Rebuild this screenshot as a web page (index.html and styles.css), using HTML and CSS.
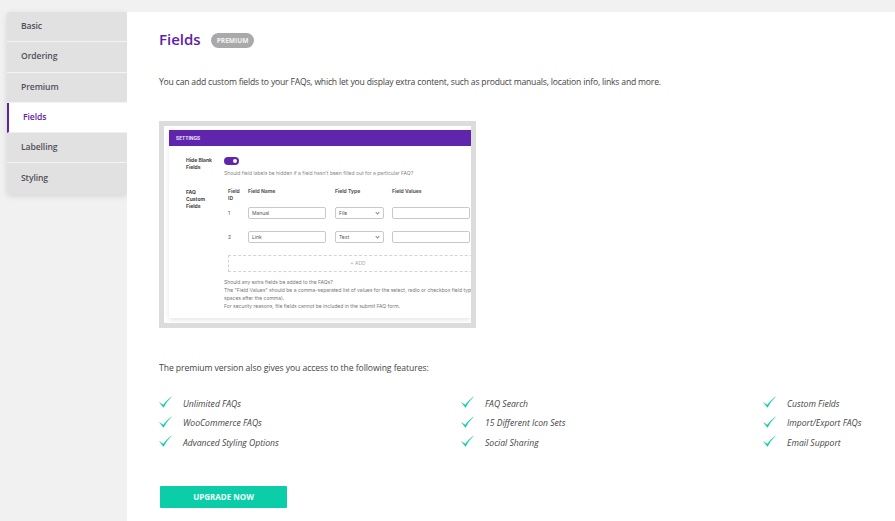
FILE: index.html
```html
<!DOCTYPE html>
<html lang="en">
<head>
<meta charset="utf-8">
<title>Fields</title>
<link rel="stylesheet" href="styles.css">
</head>
<body>
<div class="page">
  <nav class="tabs">
    <a class="tab">Basic</a>
    <a class="tab">Ordering</a>
    <a class="tab">Premium</a>
    <a class="tab active">Fields</a>
    <a class="tab">Labelling</a>
    <a class="tab">Styling</a>
  </nav>
  <main class="main">
    <div class="heading">
      <h1>Fields</h1>
      <span class="badge">PREMIUM</span>
    </div>
    <p class="intro">You can add custom fields to your FAQs, which let you display extra content, such as product manuals, location info, links and more.</p>
    <div class="shot">
      <div class="frame">
        <div class="card">
          <div class="card-head">SETTINGS</div>
          <div class="card-body">
            <div class="row-top">
              <div class="label">Hide Blank<br>Fields</div>
              <div>
                <span class="toggle"><span class="knob"></span></span>
                <div class="hint">Should field labels be hidden if a field hasn't been filled out for a particular FAQ?</div>
              </div>
            </div>
            <div class="row-fields">
              <div class="label offset">FAQ<br>Custom<br>Fields</div>
              <div class="fields">
                <div class="grid">
                  <div class="th">Field<br>ID</div>
                  <div class="th">Field Name</div>
                  <div class="th">Field Type</div>
                  <div class="th">Field Values</div>
                </div>
                <div class="grid data first">
                  <div class="td">1</div>
                  <div class="inp">Manual</div>
                  <div class="inp sel">File<span class="chev"></span></div>
                  <div class="inp"></div>
                </div>
                <div class="grid data second">
                  <div class="td">2</div>
                  <div class="inp">Link</div>
                  <div class="inp sel">Text<span class="chev"></span></div>
                  <div class="inp"></div>
                </div>
                <div class="add">+ ADD</div>
              </div>
            </div>
            <div class="notes">Should any extra fields be added to the FAQs?<br>The "Field Values" should be a comma-separated list of values for the select, radio or checkbox field types (no<br>spaces after the comma).<br>For security reasons, file fields cannot be included in the submit FAQ form.</div>
          </div>
        </div>
      </div>
    </div>
    <p class="lead">The premium version also gives you access to the following features:</p>
    <ul class="features">
      <li><svg class="tick" viewBox="0 0 13 13"><path d="M0.5 6.5 L4.5 11.5 Q7.5 5.5 12.5 0.8 Q7.5 4.5 4.3 9 Z"/></svg>Unlimited FAQs</li>
      <li><svg class="tick" viewBox="0 0 13 13"><path d="M0.5 6.5 L4.5 11.5 Q7.5 5.5 12.5 0.8 Q7.5 4.5 4.3 9 Z"/></svg>FAQ Search</li>
      <li><svg class="tick" viewBox="0 0 13 13"><path d="M0.5 6.5 L4.5 11.5 Q7.5 5.5 12.5 0.8 Q7.5 4.5 4.3 9 Z"/></svg>Custom Fields</li>
      <li><svg class="tick" viewBox="0 0 13 13"><path d="M0.5 6.5 L4.5 11.5 Q7.5 5.5 12.5 0.8 Q7.5 4.5 4.3 9 Z"/></svg>WooCommerce FAQs</li>
      <li><svg class="tick" viewBox="0 0 13 13"><path d="M0.5 6.5 L4.5 11.5 Q7.5 5.5 12.5 0.8 Q7.5 4.5 4.3 9 Z"/></svg>15 Different Icon Sets</li>
      <li><svg class="tick" viewBox="0 0 13 13"><path d="M0.5 6.5 L4.5 11.5 Q7.5 5.5 12.5 0.8 Q7.5 4.5 4.3 9 Z"/></svg>Import/Export FAQs</li>
      <li><svg class="tick" viewBox="0 0 13 13"><path d="M0.5 6.5 L4.5 11.5 Q7.5 5.5 12.5 0.8 Q7.5 4.5 4.3 9 Z"/></svg>Advanced Styling Options</li>
      <li><svg class="tick" viewBox="0 0 13 13"><path d="M0.5 6.5 L4.5 11.5 Q7.5 5.5 12.5 0.8 Q7.5 4.5 4.3 9 Z"/></svg>Social Sharing</li>
      <li><svg class="tick" viewBox="0 0 13 13"><path d="M0.5 6.5 L4.5 11.5 Q7.5 5.5 12.5 0.8 Q7.5 4.5 4.3 9 Z"/></svg>Email Support</li>
    </ul>
    <a class="cta">UPGRADE NOW</a>
  </main>
</div>
</body>
</html>
```
FILE: styles.css
```css
* { box-sizing: border-box; }
html, body { margin: 0; height: 100%; overflow: hidden; }
body { background: #f1f1f1; font-family: "Open Sans", "Noto Sans", sans-serif; color: #444; }
.page { display: flex; align-items: flex-start; padding: 12px 0 0 7px; height: 521px; }

.tabs { width: 120px; flex: none; display: flex; flex-direction: column; background: #e1e1e1; border-radius: 3px 0 0 3px; box-shadow: 0 2px 6px rgba(0,0,0,.12); }
.tab { height: 30.3px; padding: 0 0 1px 14px; display: flex; align-items: center; font-size: 8.6px; font-weight: 600; letter-spacing: -.1px; color: #50505a; border-bottom: 1px solid #f4f4f4; }
.tab:last-child { border-bottom: 0; }
.tab.active { background: #fff; color: #5f20ad; border-left: 2px solid #5f20ad; padding-left: 14px; border-bottom-color: #efefef; }

.main { flex: none; width: 768px; height: 509px; background: #fff; padding: 17px 0 0 32px; }
.heading { display: flex; align-items: center; gap: 10px; height: 20px; }
h1 { margin: 0; font-size: 15px; line-height: 20px; font-weight: 600; color: #5f20ad; }
.badge { background: #a9a9a9; color: #f4f4f4; font-size: 6.6px; font-weight: 700; line-height: 15px; height: 15px; margin-top: 2px; padding: 0 6px; border-radius: 8px; }
.intro { margin: 26px 0 0; font-size: 8.6px; letter-spacing: -.19px; line-height: 14px; color: #444; white-space: nowrap; }

.shot { width: 317px; height: 207px; margin-top: 32px; background: #dcdcdc; padding: 5px; overflow: hidden; }
.frame { height: 100%; background: #fff; padding: 4px 0 0 5px; overflow: hidden; }
.card { height: 188px; background: #fff; font-family: Inter, sans-serif; font-size: 5px; color: #666; box-shadow: 0 2px 5px rgba(0,0,0,.1); }
.card-head { height: 16px; background: #5f25ad; color: #efe6f8; font-size: 4.8px; font-weight: 700; line-height: 16px; padding-left: 7px; }
.card-body { padding: 0 0 0 17px; overflow: hidden; }
.label { width: 38px; flex: none; font-weight: 700; color: #444; line-height: 7px; }
.offset { padding-top: 1px; }
.row-top { display: flex; padding-top: 11px; height: 42px; }
.toggle { display: block; width: 15px; height: 8px; border-radius: 4px; background: #5f25ad; position: relative; }
.knob { position: absolute; right: 2px; top: 2px; width: 4px; height: 4px; border-radius: 50%; background: #fff; }
.hint { margin-top: 5px; line-height: 6px; color: #888; white-space: nowrap; }
.row-fields { display: flex; }
.fields { flex: none; width: 260px; margin-left: 4px; }
.grid { display: grid; grid-template-columns: 20px 87px 57px 78px; }
.th { font-weight: 700; color: #555; line-height: 7px; }
.data { align-items: center; }
.first { margin-top: 5px; }
.second { margin-top: 12px; }
.td { color: #555; }
.inp { width: 78px; height: 12px; border: 1px solid #c9c9c9; border-radius: 2px; line-height: 10px; padding-left: 3px; color: #555; position: relative; background: #fff; }
.sel { width: 49px; }
.chev { position: absolute; right: 4px; top: 3px; width: 3px; height: 3px; border-right: 1px solid #888; border-bottom: 1px solid #888; transform: rotate(45deg); }
.add { width: 260px; height: 17px; margin-top: 12px; border: 1px dashed #d4d4d4; text-align: center; line-height: 15px; color: #aaa; }
.notes { margin: 6px 0 0 38px; white-space: nowrap; line-height: 8px; color: #777; }

.lead { margin: 33px 0 0; font-size: 8.6px; letter-spacing: -.06px; line-height: 14px; color: #444; }
.features { list-style: none; margin: 19px 0 0; padding: 0; display: grid; grid-template-columns: 302px 302px 1fr; grid-auto-rows: 19.5px; width: 736px; }
.features li { display: flex; align-items: center; font-size: 8.6px; font-style: italic; color: #444; white-space: nowrap; }
.tick { width: 13px; height: 13px; flex: none; margin: 0 11px 2px 0; fill: #0ccba6; stroke: #0ccba6; stroke-width: .3; }
.cta { display: block; width: 127px; height: 22px; margin: 33px 0 0 1px; background: #0bcea8; color: #f2fffb; border-radius: 1px; text-align: center; font-size: 8px; font-weight: 700; line-height: 22px; }
```
